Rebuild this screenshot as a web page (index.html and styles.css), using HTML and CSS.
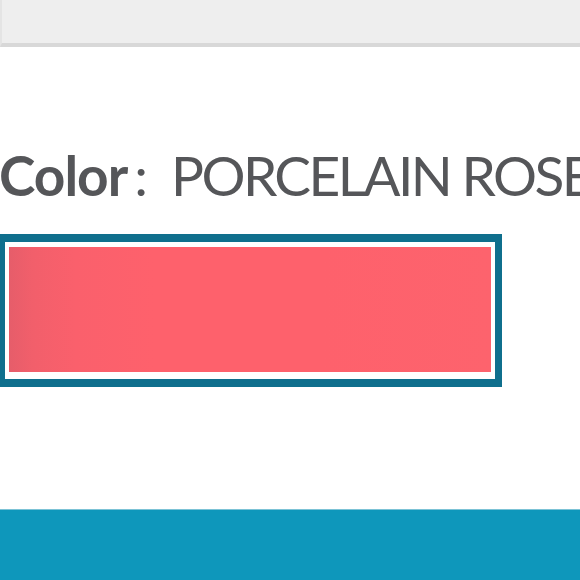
FILE: index.html
```html
<!DOCTYPE html>
<html>
<head>
<meta charset="utf-8">
<link rel="stylesheet" href="styles.css">
</head>
<body>
<div class="topbar"></div>
<main class="content">
  <h2 class="color-label"><span class="label-key">Color</span><span class="label-sep">:</span> <span class="label-value">PORCELAIN ROSE</span></h2>
  <div class="swatch-frame">
    <div class="swatch"></div>
  </div>
</main>
<footer class="bottombar"></footer>
</body>
</html>
```
FILE: styles.css
```css
html, body {
  margin: 0;
  padding: 0;
  background: #ffffff;
  width: 580px;
  height: 580px;
  overflow: hidden;
}
body {
  display: flex;
  flex-direction: column;
  font-family: Lato, "Open Sans", sans-serif;
}
.topbar {
  height: 43px;
  background: #eeeeee;
  border-left: 2px solid #e4e4e4;
  border-bottom: 4px solid #d8d8d8;
  flex: none;
}
.content {
  flex: 1;
  padding-top: 101px;
  display: flex;
  flex-direction: column;
}
.color-label {
  margin: 0 0 31px -1px;
  font-size: 55px;
  line-height: 55px;
  font-weight: 400;
  color: #555659;
  white-space: nowrap;
  letter-spacing: -0.5px;
}
.label-key {
  font-weight: 700;
  letter-spacing: -1px;
}
.label-sep {
  margin-left: 7px;
  margin-right: 10px;
}
.label-value {
  letter-spacing: -2.6px;
}
.swatch-frame {
  margin-left: -2px;
  width: 482px;
  border-style: solid;
  border-color: #0f6f8d;
  border-width: 8px 7px;
  padding: 5px 4px 7px 4px;
  background: #ffffff;
}
.swatch {
  height: 125px;
  background: linear-gradient(90deg, #e65d6a 0%, #f25f6b 5%, #fa606c 14%, #fe616c 30%, #fe616c 65%, #fd636d 100%);
}
.bottombar {
  flex: none;
  height: 70px;
  background: #0e97bb;
  border-top: 1px solid #7cc3d6;
}
```
